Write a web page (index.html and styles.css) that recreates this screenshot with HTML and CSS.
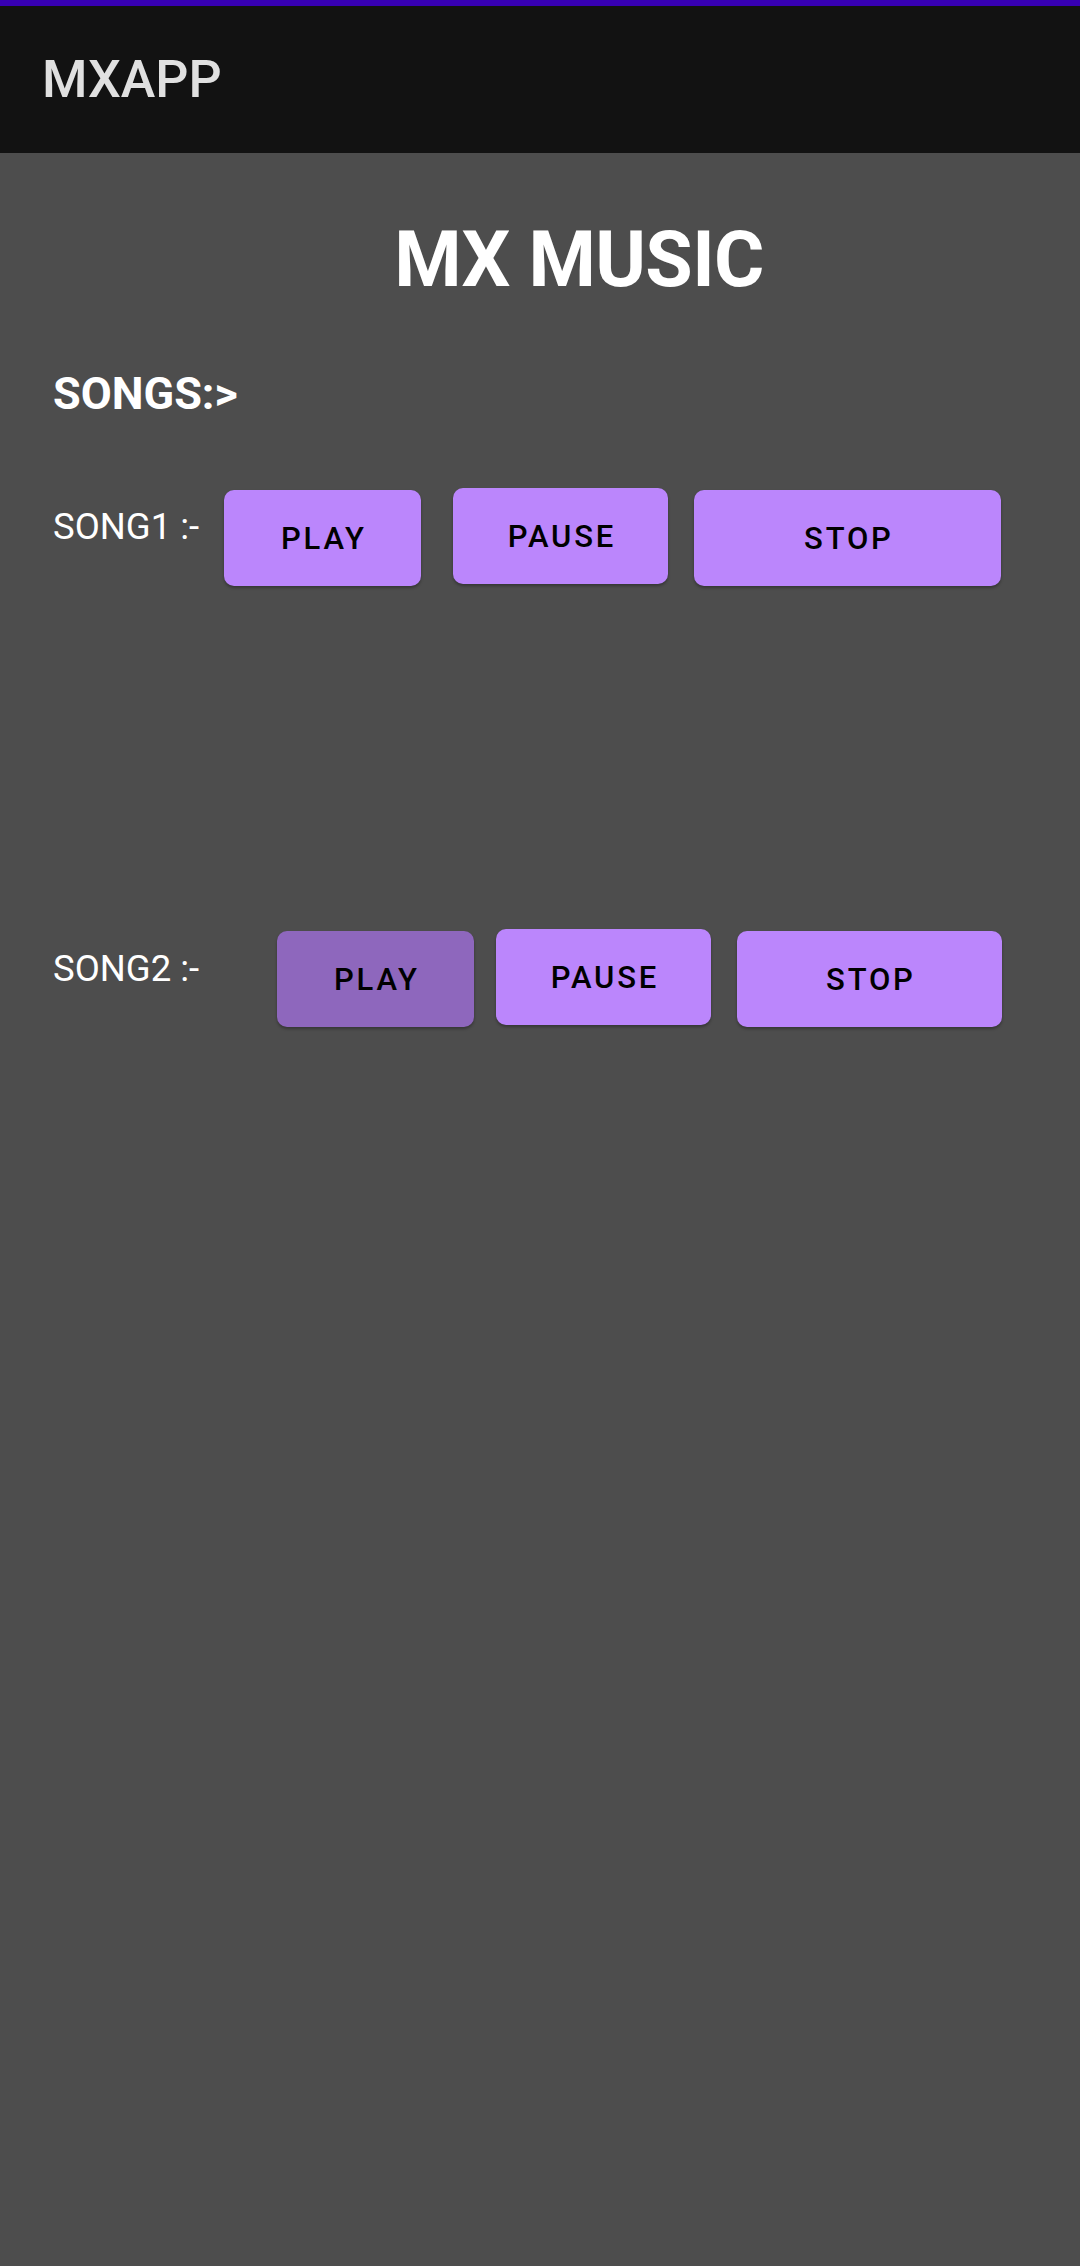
FILE: index.html
```html
<!DOCTYPE html>
<html>
<head>
<meta charset="utf-8">
<link rel="stylesheet" href="styles.css">
</head>
<body>
<div class="status"></div>
<header class="toolbar"><span class="app-title">MXAPP</span></header>
<main class="content">
  <h1 class="title">MX MUSIC</h1>
  <h2 class="songs">SONGS:&gt;</h2>
  <div class="row row1">
    <span class="label">SONG1 :-</span>
    <button class="btn play">PLAY</button>
    <button class="btn pause">PAUSE</button>
    <button class="btn stop">STOP</button>
  </div>
  <div class="row row2">
    <span class="label">SONG2 :-</span>
    <button class="btn play pressed">PLAY</button>
    <button class="btn pause">PAUSE</button>
    <button class="btn stop">STOP</button>
  </div>
</main>
</body>
</html>
```
FILE: styles.css
```css
html, body {
  margin: 0;
  padding: 0;
}
body {
  background: #4d4d4d;
  width: 1080px;
  height: 2266px;
  overflow: hidden;
  font-family: Roboto, "Liberation Sans", sans-serif;
}
.status {
  height: 6px;
  background: #3700b3;
}
.toolbar {
  height: 147px;
  background: #121212;
  display: flex;
  align-items: center;
  padding-left: 42px;
}
.app-title {
  color: #e0e0e0;
  font-size: 52px;
  font-weight: 500;
  line-height: 1;
}
.content {
  display: flex;
  flex-direction: column;
}
.title {
  margin: 69px 0 0 0;
  padding-left: 78px;
  text-align: center;
  color: #ffffff;
  font-size: 77px;
  font-weight: 700;
  letter-spacing: -0.6px;
  line-height: 77px;
}
.songs {
  margin: 72px 0 0 0;
  padding-left: 53px;
  color: #ffffff;
  font-size: 45px;
  font-weight: 700;
  line-height: 45px;
}
.row {
  display: flex;
  align-items: flex-start;
  padding-left: 53px;
}
.row1 {
  margin-top: 72px;
}
.row2 {
  margin-top: 343px;
}
.label {
  flex: none;
  color: #ffffff;
  font-size: 36.5px;
  line-height: 36px;
  font-weight: 400;
}
.row1 .label {
  width: 171px;
  margin-top: 21px;
}
.row2 .label {
  width: 224px;
  margin-top: 22px;
}
.btn {
  flex: none;
  border: none;
  background: #bb86fc;
  color: #000000;
  font-family: Roboto, "Liberation Sans", sans-serif;
  font-size: 31px;
  font-weight: 500;
  letter-spacing: 2.8px;
  padding: 0 0 0 2.8px;
  height: 96px;
  border-radius: 10px;
  box-shadow: 0 2px 3px rgba(0, 0, 0, 0.3);
  display: flex;
  align-items: center;
  justify-content: center;
}
.btn.play, .btn.stop {
  margin-top: 2px;
}
.btn.play {
  width: 197px;
}
.btn.pause {
  width: 215px;
}
.row1 .pause {
  margin-left: 32px;
}
.row1 .stop {
  margin-left: 26px;
  width: 307px;
}
.row2 .pause {
  margin-left: 22px;
}
.row2 .stop {
  margin-left: 26px;
  width: 265px;
}
.btn.pressed {
  background: #8e67bd;
}
```
